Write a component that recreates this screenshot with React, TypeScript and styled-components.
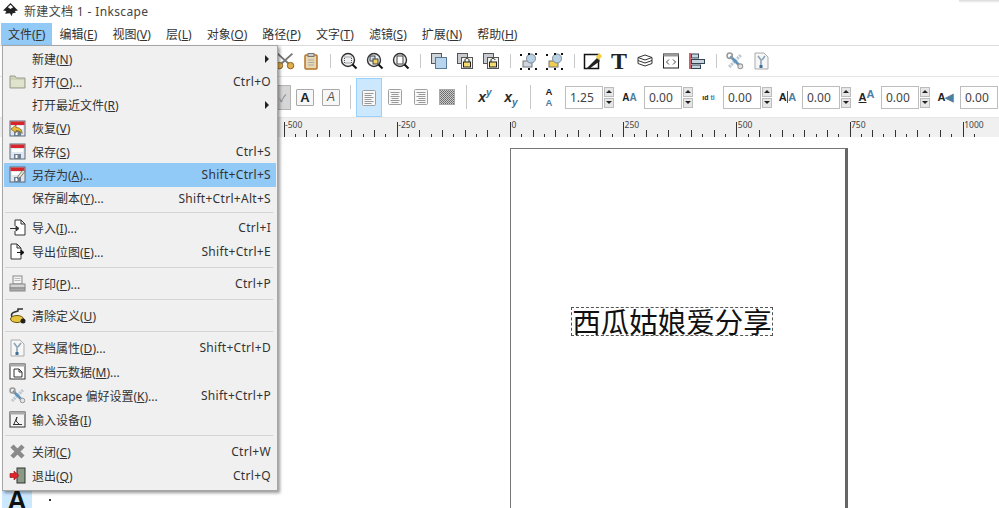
import React from 'react';
import styled, { createGlobalStyle } from 'styled-components';

const GlobalStyle = createGlobalStyle`
  html, body { margin: 0; padding: 0; background: #fff; }
  body { font-family: "Noto Sans", "Noto Sans CJK SC", sans-serif; font-size: 12px; color: #333; }
`;

const Window = styled.div`
  position: relative;
  width: 999px;
  height: 508px;
  overflow: hidden;
  display: flex;
  flex-direction: column;
  background: #fff;
`;

const TitleBar = styled.div`
  height: 23px;
  box-sizing: border-box;
  padding: 0 0 2px 2px;
  display: flex;
  align-items: center;
  gap: 5px;
  font-size: 12px;
  letter-spacing: 0.35px;
  color: #444;
`;

const TopShadow = styled.div`
  position: absolute;
  top: 0;
  right: 0;
  width: 40px;
  height: 3px;
  background: linear-gradient(#d8d8d8, #fff);
`;

const MenuBar = styled.div`
  height: 22px;
  display: flex;
  padding-left: 1px;
  border-bottom: 1px solid #dcdcdc;
`;

const MenuTitle = styled.div<{ $open?: boolean }>`
  display: flex;
  align-items: center;
  padding: 0 7px;
  background: ${p => (p.$open ? '#91c9f7' : 'transparent')};
  margin-right: ${p => (p.$open ? '0' : '1.1px')};
  u { text-underline-offset: 1px; }
`;

const Toolbar = styled.div<{ $h: number; $pl: number }>`
  height: ${p => p.$h}px;
  display: flex;
  align-items: stretch;
  padding-left: ${p => p.$pl}px;
  border-bottom: 1px solid #e6e6e6;
  box-sizing: border-box;
  flex: none;
`;

const Slot = styled.div<{ $active?: boolean; $w?: number }>`
  width: ${p => p.$w ?? 26}px;
  flex: none;
  display: flex;
  align-items: center;
  justify-content: center;
  box-sizing: border-box;
  margin: ${p => (p.$active ? '1px 0 0' : '0')};
  background: ${p => (p.$active ? '#cce8ff' : 'transparent')};
  border: 1px solid ${p => (p.$active ? '#99d1ff' : 'transparent')};
`;

const Sep = styled.div`
  width: 1px;
  flex: none;
  margin: 8px 5.5px;
  background: #c8c8c8;
`;

const ToggleBox = styled.div`
  width: 24px;
  height: 25px;
  background: #d6d6d6;
  border: 1px solid #b4b4b4;
  box-sizing: border-box;
  display: flex;
  align-items: center;
  justify-content: flex-end;
  padding-right: 4px;
  font-size: 10px;
  color: #777;
`;

const SpinField = styled.div`
  width: 50px;
  flex: none;
  display: flex;
  align-items: center;
  gap: 1px;
`;

const SpinInput = styled.div`
  width: 38px;
  height: 23px;
  flex: none;
  box-sizing: border-box;
  border: 1px solid #bdbdbd;
  padding-left: 4px;
  display: flex;
  align-items: center;
  font-size: 12px;
  color: #444;
  background: #fff;
`;

const SpinButtons = styled.div`
  width: 10px;
  height: 21px;
  flex: none;
  display: flex;
  flex-direction: column;
  gap: 1px;
`;

const SpinButton = styled.div<{ $down?: boolean }>`
  flex: 1;
  background: #e6e6e6;
  border: 1px solid #bcbcbc;
  display: flex;
  align-items: center;
  justify-content: center;
  &::after {
    content: '';
    border-left: 3px solid transparent;
    border-right: 3px solid transparent;
    ${p => (p.$down ? 'border-top: 3px solid #222;' : 'border-bottom: 3px solid #222;')}
  }
`;

const RulerBar = styled.div`
  height: 19px;
  background: #f0f0f0;
  flex: none;
  svg { display: block; }
`;

const Workspace = styled.div`
  flex: 1;
  min-height: 0;
  display: flex;
`;

const Toolbox = styled.div`
  width: 32px;
  flex: none;
  display: flex;
  align-items: flex-end;
  justify-content: flex-end;
`;

const ToolButton = styled.div`
  width: 30px;
  height: 19px;
  background: #cce8ff;
  display: flex;
  justify-content: center;
  overflow: hidden;
`;

const ToolGlyph = styled.span`
  font-family: "Liberation Sans", sans-serif;
  font-weight: 700;
  font-size: 27px;
  line-height: 24px;
  color: #111;
  margin-left: 0;
`;

const VRuler = styled.div`
  width: 20px;
  flex: none;
  position: relative;
  &::after {
    content: '';
    position: absolute;
    left: 17px;
    bottom: 7px;
    width: 2px;
    height: 2px;
    background: #333;
  }
`;

const Canvas = styled.div`
  flex: 1;
  padding: 11px 0 0 458px;
`;

const Page = styled.div`
  width: 338px;
  height: 500px;
  box-sizing: border-box;
  border: 1px solid #777;
  border-right: 3px solid #666;
  background: #fff;
  display: flex;
  justify-content: center;
  padding: 159px 12px 0 0;
`;

const SelectedText = styled.div`
  height: 27px;
  width: 200px;
  box-sizing: border-box;
  outline: 1px dashed #555;
  font-family: "Noto Sans CJK SC", sans-serif;
  font-size: 28.5px;
  line-height: 25px;
  color: #111;
  white-space: nowrap;
  text-align: center;
`;

const Menu = styled.div`
  position: absolute;
  left: 2px;
  top: 45px;
  width: 276px;
  height: 446px;
  box-sizing: border-box;
  background: #f0f0f0;
  border: 1px solid #a6a6a6;
  padding: 1px 1px 3px;
  box-shadow: 2px 2px 3px rgba(0, 0, 0, 0.4);
  z-index: 2;
`;

const Row = styled.div<{ $tall?: boolean; $on?: boolean }>`
  height: ${p => (p.$tall ? 24 : 23.25)}px;
  display: flex;
  align-items: center;
  padding-right: 5px;
  background: ${p => (p.$on ? '#91c9f7' : 'transparent')};
  u { text-underline-offset: 1px; }
`;

const RowIcon = styled.div`
  width: 28px;
  flex: none;
  box-sizing: border-box;
  padding-right: 2px;
  display: flex;
  justify-content: center;
`;

const RowLabel = styled.div`
  flex: 1;
  white-space: nowrap;
`;

const Shortcut = styled.div`
  white-space: nowrap;
  letter-spacing: 0.3px;
`;

const Arrow = styled.div`
  margin-right: 2px;
  border-top: 4px solid transparent;
  border-bottom: 4px solid transparent;
  border-left: 4px solid #222;
`;

const MenuSep = styled.div<{ $h: number }>`
  height: ${p => p.$h}px;
  display: flex;
  align-items: center;
  padding: 0 3px 0 1px;
  &::after {
    content: '';
    flex: 1;
    height: 1px;
    background: #d4d4d4;
  }
`;

const S = ({ w = 18, h = 18, box = '0 0 18 18', children }: { w?: number; h?: number; box?: string; children: React.ReactNode }) => (
  <svg width={w} height={h} viewBox={box} xmlns="http://www.w3.org/2000/svg">{children}</svg>
);

const Logo = () => (
  <S w={17} h={17} box="0 0 16 16">
    <path d="M8 1 15 8l-3 .5L13 10l-3 .5-1 3-1.500-3L3 11l1-2.500L1 8z" fill="#222" />
    <path d="M8 2.500 10.500 5 8 6.500 5.500 5z" fill="#fff" />
  </S>
);

const Floppy = ({ mark }: { mark?: 'undo' | 'edit' }) => (
  <S w={17} h={17} box="0 0 17 17">
    <rect x="1" y="1" width="15" height="15" fill="#dfe6ee" stroke="#5a6a7a" />
    <rect x="1.500" y="1.500" width="14" height="3.500" fill="#d8262c" />
    <rect x="3" y="6" width="11" height="3" fill="#fff" />
    <rect x="5" y="11" width="7" height="5" fill="#6d8093" />
    <rect x="6.500" y="12" width="2" height="3" fill="#fff" />
    {mark === 'undo' && <path d="M2 9 7 5v2.500c4 0 6 2 6 6-1.500-2-3-3-6-3V13z" fill="#e8b93a" stroke="#7a5a10" strokeWidth=".7" />}
    {mark === 'edit' && <path d="M9 10 14 4l2 1.500-5 6-2.500 1z" fill="#e8e2cc" stroke="#555" strokeWidth=".7" />}
  </S>
);

const Folder = () => (
  <S w={17} h={15} box="0 0 17 15">
    <path d="M1 2h5l1.500 2H16v10H1z" fill="#cfd4b8" stroke="#9a9c8c" />
    <rect x="2" y="6" width="13" height="7" fill="#dfe3cc" />
  </S>
);

const ImportIcon = () => (
  <S w={17} h={17} box="0 0 17 17">
    <path d="M6 1h6l4 4v11H6v-4M6 7V1M12 1v4h4" fill="#fff" stroke="#333" />
    <path d="M1 9.500h8M7 7l3 2.500L7 12z" fill="#333" stroke="#333" />
  </S>
);

const ExportIcon = () => (
  <S w={17} h={17} box="0 0 17 17">
    <path d="M2 1h6l4 4v11H2zM8 1v4h4" fill="#fff" stroke="#333" />
    <path d="M8 9.500h6M12 7l3 2.500L12 12z" fill="#111" stroke="#111" />
  </S>
);

const Printer = () => (
  <S w={17} h={17} box="0 0 17 17">
    <rect x="4" y="1" width="9" height="8" fill="#f4f4f4" stroke="#888" />
    <path d="M5.500 3.500h6M5.500 5.500h6" stroke="#bbb" />
    <rect x="1" y="9" width="15" height="4" fill="#d4d4d4" stroke="#888" />
    <rect x="1" y="13" width="15" height="3" fill="#aaa" stroke="#888" />
  </S>
);

const Vacuum = () => (
  <S w={17} h={17} box="0 0 17 17">
    <path d="M3 10C1 6 5 5 9 4V2h5" fill="none" stroke="#333" strokeWidth="1.500" />
    <ellipse cx="8" cy="12" rx="6.500" ry="3.500" fill="#e6c43c" stroke="#665510" />
    <circle cx="14" cy="14" r="2.500" fill="#222" />
  </S>
);

const DocProps = () => (
  <S w={17} h={18} box="0 0 17 18">
    <path d="M2 1h9l4 4v12H2z" fill="#f6f6f6" stroke="#aaa" />
    <path d="M5 4 8 8v7M12 4 9 8" fill="none" stroke="#8aa4b8" strokeWidth="1.600" />
    <rect x="6.500" y="13" width="3" height="3" fill="#3d6f98" />
  </S>
);

const DocMeta = () => (
  <S w={17} h={17} box="0 0 17 17">
    <rect x="1" y="1" width="15" height="15" fill="#fff" stroke="#333" />
    <rect x="1" y="1" width="15" height="2.500" fill="#aaa" />
    <path d="M5 6h5l3 3v5H5zM10 6v3h3" fill="#fff" stroke="#333" />
  </S>
);

const Tools = ({ w = 17 }: { w?: number }) => (
  <S w={w} h={w} box="0 0 17 17">
    <path d="M3 14 14 3" stroke="#bcc9d3" strokeWidth="3" strokeDasharray="2 .7" />
    <path d="M4 4 14 14" stroke="#5f93bb" strokeWidth="2.600" />
    <circle cx="3.500" cy="3.500" r="2.500" fill="none" stroke="#9a9a9a" strokeWidth="1.500" />
    <circle cx="13.500" cy="13.500" r="2.300" fill="#e4e4e4" stroke="#999" />
  </S>
);

const InputDev = () => (
  <S w={17} h={17} box="0 0 17 17">
    <rect x="1" y="1" width="15" height="15" fill="#f4f4f4" stroke="#333" />
    <rect x="1" y="1" width="15" height="2.500" fill="#aaa" />
    <path d="M4 13.500h9M5 13 8 6l-1 4 3 3" fill="none" stroke="#333" />
  </S>
);

const CloseX = () => (
  <S w={17} h={17} box="0 0 17 17">
    <path d="M3 3 14 14M14 3 3 14" stroke="#8a8a8a" strokeWidth="4.500" />
  </S>
);

const Quit = () => (
  <S w={17} h={17} box="0 0 17 17">
    <rect x="8" y="1" width="8" height="15" fill="#8a9a84" stroke="#333" />
    <path d="M1 6.500h4V4l5 4.500L5 13v-2.500H1z" fill="#e0242c" stroke="#8a1015" strokeWidth=".6" />
  </S>
);

const Cut = () => (
  <S w={26} h={20} box="0 0 26 20">
    <path d="M5 2 17 13M21 2 9 13" stroke="#777" strokeWidth="2" />
    <circle cx="7" cy="15" r="3.500" fill="#e0b050" stroke="#8a5a10" />
    <circle cx="19" cy="15" r="3.500" fill="#e0b050" stroke="#8a5a10" />
  </S>
);

const Clipboard = () => (
  <S>
    <rect x="3" y="3" width="12" height="14" rx="1" fill="#e8d8b0" stroke="#b5742a" strokeWidth="1.500" />
    <rect x="6" y="1.500" width="6" height="3" fill="#ccc" stroke="#777" />
    <path d="M6 8h6M6 10.500h6M6 13h6" stroke="#aaa" />
  </S>
);

const Zoom = ({ kind }: { kind: 'sel' | 'draw' | 'page' }) => (
  <S>
    <circle cx="8" cy="8" r="6.500" fill="#eef0f2" stroke="#333" strokeWidth="1.400" />
    <path d="m12.500 12.500 4 4" stroke="#111" strokeWidth="2" />
    {kind === 'sel' && <rect x="4.500" y="5" width="7" height="6" fill="none" stroke="#555" strokeDasharray="1 1" />}
    {kind === 'draw' && <g><rect x="4" y="4" width="5" height="5" fill="#cfe0ef" stroke="#444" /><rect x="7" y="7" width="5" height="5" fill="#f0d060" stroke="#444" /></g>}
    {kind === 'page' && <rect x="5" y="4" width="6" height="8" fill="#fff" stroke="#444" />}
  </S>
);

const Duplicate = () => (
  <S>
    <rect x="1.500" y="1.500" width="10" height="10" fill="#d0d5da" stroke="#555" />
    <rect x="5.500" y="5.500" width="11" height="11" fill="#b9d5ee" stroke="#5a7a95" />
  </S>
);

const Lock = ({ shift }: { shift?: boolean }) => (
  <S>
    <rect x="1.500" y="1.500" width="10" height="10" fill="#c8ccd0" stroke="#555" />
    <rect x="5.500" y="5.500" width="11" height="11" fill="#f2f2ee" stroke="#555" />
    <rect x="7.500" y="10" width="7" height="5" fill="#f5dc70" stroke="#222" />
    <path d={shift ? 'M9 10V8c0-2 4-2 4 0' : 'M9 10V8c0-2 4-2 4 0v2'} fill="none" stroke="#222" />
  </S>
);

const Group = ({ yellow }: { yellow?: boolean }) => (
  <S>
    <rect x="3" y="9" width="9" height="6" fill={yellow ? '#f0cf50' : '#cdd5de'} stroke="#777" />
    <circle cx="11" cy="6.500" r="4.500" fill="#b8d0e4" stroke="#7a8a98" />
    {[[0, 1], [8, 0], [15, 0], [0, 15], [8, 15], [15, 15]].map(([x, y]) => (
      <rect key={`${x}-${y}`} x={x} y={y + 1} width="2" height="2" fill="#111" />
    ))}
  </S>
);

const Pen = () => (
  <S w={20} h={20} box="0 0 20 20">
    <rect x="1.500" y="3.500" width="14" height="14" fill="#fff" stroke="#111" strokeWidth="1.500" />
    <path d="M3 18 14 7l3 3L6 18z" fill="#222" />
    <path d="M13 6l3-4 3 3-3 4z" fill="#f0d040" />
  </S>
);

const BigT = styled.span`
  font-family: "Liberation Serif", serif;
  font-weight: 700;
  font-size: 24px;
  line-height: 24px;
  color: #222;
`;

const Layers = () => (
  <S>
    <path d="M9 3 16 5.500 9 8 2 5.500z" fill="#fff" stroke="#333" />
    <path d="M2 8.500 9 11l7-2.500M2 11.500 9 14l7-2.500" fill="none" stroke="#333" />
    <path d="M2 5.500v6M16 5.500v6" stroke="#333" />
  </S>
);

const XmlEditor = () => (
  <S>
    <rect x="1.500" y="2" width="15" height="14" fill="#fff" stroke="#222" />
    <rect x="1.500" y="2" width="15" height="2.500" fill="#999" />
    <path d="M7 7.500 4.500 10 7 12.500M11 7.500 13.500 10 11 12.500" fill="none" stroke="#444" />
  </S>
);

const Align = () => (
  <S>
    <path d="M2 1v16" stroke="#b5202a" strokeWidth="1.400" />
    <rect x="3.500" y="2" width="7" height="4" fill="#c8d4de" stroke="#345" />
    <rect x="3.500" y="7.500" width="13" height="4" fill="#c8d4de" stroke="#345" />
    <rect x="3.500" y="13" width="9" height="3.500" fill="#c8d4de" stroke="#345" />
  </S>
);

const Letter = styled.div<{ $bold?: boolean }>`
  width: 16px;
  height: 15px;
  border: 1px solid #a9a9a9;
  border-radius: 1px;
  background: #f7f7f7;
  display: flex;
  align-items: center;
  justify-content: center;
  font-family: "Liberation Sans", sans-serif;
  font-size: ${p => (p.$bold ? 13 : 12)}px;
  font-weight: ${p => (p.$bold ? 700 : 400)};
  font-style: ${p => (p.$bold ? 'normal' : 'italic')};
  color: ${p => (p.$bold ? '#222' : '#555')};
`;

const AlignDoc = ({ kind }: { kind: 'left' | 'center' | 'right' | 'full' }) => {
  if (kind === 'full') {
    return (
      <S w={16} h={16} box="0 0 16 16">
        <pattern id="dots" width="2" height="2" patternUnits="userSpaceOnUse">
          <rect width="1" height="1" fill="#666" />
          <rect x="1" y="1" width="1" height="1" fill="#777" />
          <rect x="1" width="1" height="1" fill="#ccc" />
          <rect y="1" width="1" height="1" fill="#ccc" />
        </pattern>
        <rect x=".5" y=".5" width="15" height="15" fill="url(#dots)" stroke="#aaa" />
      </S>
    );
  }
  const lines = [3, 5, 7, 9, 11, 13];
  return (
    <S w={14} h={16} box="0 0 14 16">
      <rect x=".5" y=".5" width="13" height="15" rx="1" fill="#f8f8f8" stroke="#a0a0a0" />
      {lines.map((y, i) => {
        const w = i % 2 ? 7 : 9;
        const x = kind === 'left' ? 2.5 : kind === 'center' ? (14 - w) / 2 : 11.5 - w;
        return <rect key={y} x={x} y={y} width={w} height="1" fill="#999" />;
      })}
    </S>
  );
};

const ScriptMark = styled.div`
  font-family: "Liberation Sans", sans-serif;
  font-style: italic;
  font-weight: 700;
  font-size: 14px;
  line-height: 18px;
  color: #2a2a2a;
  sup, sub { font-size: 10px; color: #3d6f98; line-height: 0; }
`;

const TinyPair = styled.div<{ $size?: number; $raised?: boolean; $rule?: boolean }>`
  font-family: "Liberation Sans", sans-serif;
  font-weight: 700;
  font-size: ${p => p.$size ?? 10}px;
  color: #222;
  display: flex;
  align-items: baseline;
  white-space: nowrap;
  span {
    color: #4d7ea3;
    ${p => (p.$raised ? 'transform: translateY(-3px);' : '')}
    ${p => (p.$rule ? 'border-left: 1px solid #555; margin-left: 0.5px;' : '')}
  }
`;

const LineHeight = styled.div`
  font-family: "Liberation Sans", sans-serif;
  font-weight: 700;
  font-size: 9.5px;
  line-height: 11px;
  text-align: center;
  color: #222;
  margin-right: 3px;
  div { color: #4d7ea3; }
`;

const Spin = ({ value }: { value: string }) => (
  <SpinField>
    <SpinInput>{value}</SpinInput>
    <SpinButtons>
      <SpinButton />
      <SpinButton $down />
    </SpinButtons>
  </SpinField>
);

const RulerTicks = () => {
  const ticks = [];
  const labels = [-500, -250, 0, 250, 500, 750, 1000];
  for (let i = 0; i < 62; i++) {
    const x = Math.round(283.5 + i * 11.32) + 0.5;
    const major = i % 10 === 0;
    const top = major ? 4 : i % 2 === 0 ? 12 : 16;
    ticks.push(<line key={i} x1={x} x2={x} y1={top} y2={19} stroke="#333" />);
  }
  return (
    <svg width={999} height={19} xmlns="http://www.w3.org/2000/svg">
      {ticks}
      {labels.map((n, i) => (
        <text key={n} x={285 + i * 113.2} y={10} fontSize="8.500" fill="#444" fontFamily="Noto Sans, sans-serif">{n}</text>
      ))}
    </svg>
  );
};

type Item = {
  label: React.ReactNode;
  icon?: React.ReactNode;
  key?: string;
  sub?: boolean;
  on?: boolean;
  tall?: boolean;
  sep?: number;
};

const items: Item[] = [
  { label: <>新建(<u>N</u>)</>, sub: true },
  { label: <>打开(<u>O</u>)...</>, icon: <Folder />, key: 'Ctrl+O' },
  { label: <>打开最近文件(<u>R</u>)</>, sub: true },
  { label: <>恢复(<u>V</u>)</>, icon: <Floppy mark="undo" /> },
  { label: <>保存(<u>S</u>)</>, icon: <Floppy />, key: 'Ctrl+S' },
  { label: <>另存为(<u>A</u>)...</>, icon: <Floppy mark="edit" />, key: 'Shift+Ctrl+S', on: true },
  { label: <>保存副本(<u>Y</u>)...</>, key: 'Shift+Ctrl+Alt+S', sep: 6 },
  { label: <>导入(<u>I</u>)...</>, icon: <ImportIcon />, key: 'Ctrl+I', tall: true },
  { label: <>导出位图(<u>E</u>)...</>, icon: <ExportIcon />, key: 'Shift+Ctrl+E', tall: true, sep: 8 },
  { label: <>打印(<u>P</u>)...</>, icon: <Printer />, key: 'Ctrl+P', tall: true, sep: 8 },
  { label: <>清除定义(<u>U</u>)</>, icon: <Vacuum />, tall: true, sep: 8 },
  { label: <>文档属性(<u>D</u>)...</>, icon: <DocProps />, key: 'Shift+Ctrl+D', tall: true },
  { label: <>文档元数据(<u>M</u>)...</>, icon: <DocMeta />, tall: true },
  { label: <>Inkscape 偏好设置(<u>K</u>)...</>, icon: <Tools />, key: 'Shift+Ctrl+P', tall: true },
  { label: <>输入设备(<u>I</u>)</>, icon: <InputDev />, tall: true, sep: 8 },
  { label: <>关闭(<u>C</u>)</>, icon: <CloseX />, key: 'Ctrl+W', tall: true },
  { label: <>退出(<u>Q</u>)</>, icon: <Quit />, key: 'Ctrl+Q', tall: true },
];

const titles: [string, string][] = [
  ['编辑', 'E'], ['视图', 'V'], ['层', 'L'], ['对象', 'O'], ['路径', 'P'],
  ['文字', 'T'], ['滤镜', 'S'], ['扩展', 'N'], ['帮助', 'H'],
];

export default function App() {
  return (
    <Window>
      <GlobalStyle />
      <TopShadow />
      <TitleBar><Logo />新建文档 1 - Inkscape</TitleBar>
      <MenuBar>
        <MenuTitle $open>文件(<u>F</u>)</MenuTitle>
        {titles.map(([t, k]) => (
          <MenuTitle key={t}>{t}(<u>{k}</u>)</MenuTitle>
        ))}
      </MenuBar>

      <Toolbar $h={31} $pl={272}>
        <Slot><Cut /></Slot>
        <Slot><Clipboard /></Slot>
        <Sep />
        <Slot><Zoom kind="sel" /></Slot>
        <Slot><Zoom kind="draw" /></Slot>
        <Slot><Zoom kind="page" /></Slot>
        <Sep />
        <Slot><Duplicate /></Slot>
        <Slot><Lock /></Slot>
        <Slot><Lock shift /></Slot>
        <Sep />
        <Slot><Group /></Slot>
        <Slot><Group yellow /></Slot>
        <Sep />
        <Slot><Pen /></Slot>
        <Slot><BigT>T</BigT></Slot>
        <Slot><Layers /></Slot>
        <Slot><XmlEditor /></Slot>
        <Slot><Align /></Slot>
        <Sep />
        <Slot><Tools w={18} /></Slot>
        <Slot><DocProps /></Slot>
      </Toolbar>

      <Toolbar $h={41} $pl={266}>
        <Slot><ToggleBox>✓</ToggleBox></Slot>
        <Slot><Letter $bold>A</Letter></Slot>
        <Slot><Letter>A</Letter></Slot>
        <Sep />
        <Slot $active><AlignDoc kind="left" /></Slot>
        <Slot><AlignDoc kind="center" /></Slot>
        <Slot><AlignDoc kind="right" /></Slot>
        <Slot><AlignDoc kind="full" /></Slot>
        <Sep />
        <Slot><ScriptMark>x<sup>y</sup></ScriptMark></Slot>
        <Slot><ScriptMark>x<sub>y</sub></ScriptMark></Slot>
        <Sep />
        <Slot $w={29}><LineHeight>A<div>A</div></LineHeight></Slot>
        <Spin value="1.25" />
        <Slot $w={29}><TinyPair>A<span>A</span></TinyPair></Slot>
        <Spin value="0.00" />
        <Slot $w={29}><TinyPair $size={7}>ıd&nbsp;<span>ti</span></TinyPair></Slot>
        <Spin value="0.00" />
        <Slot $w={29}><TinyPair $size={11} $rule>A<span>A</span></TinyPair></Slot>
        <Spin value="0.00" />
        <Slot $w={29}><TinyPair $size={11} $raised><u>A</u><span>A</span></TinyPair></Slot>
        <Spin value="0.00" />
        <Slot $w={29}><TinyPair $size={11}>A<span>◀</span></TinyPair></Slot>
        <Spin value="0.00" />
      </Toolbar>

      <RulerBar><RulerTicks /></RulerBar>

      <Workspace>
        <Toolbox>
          <ToolButton><ToolGlyph>A</ToolGlyph></ToolButton>
        </Toolbox>
        <VRuler />
        <Canvas>
          <Page>
            <SelectedText>西瓜姑娘爱分享</SelectedText>
          </Page>
        </Canvas>
      </Workspace>

      <Menu>
        {items.map((it, i) => (
          <React.Fragment key={i}>
            <Row $tall={it.tall} $on={it.on}>
              <RowIcon>{it.icon}</RowIcon>
              <RowLabel>{it.label}</RowLabel>
              {it.key && <Shortcut>{it.key}</Shortcut>}
              {it.sub && <Arrow />}
            </Row>
            {it.sep && <MenuSep $h={it.sep} />}
          </React.Fragment>
        ))}
      </Menu>
    </Window>
  );
}
